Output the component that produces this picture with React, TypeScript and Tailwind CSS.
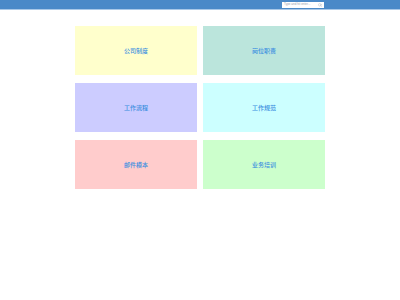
import { Search } from "lucide-react";

const cards = [
  { label: "公司制度", bg: "bg-[#ffffcc]" },
  { label: "岗位职责", bg: "bg-[#bbe5dc]" },
  { label: "工作流程", bg: "bg-[#ccccff]" },
  { label: "工作规范", bg: "bg-[#ccffff]" },
  { label: "邮件模本", bg: "bg-[#ffcccc]" },
  { label: "业务培训", bg: "bg-[#ccffcc]" },
];

export default function App() {
  return (
    <div className="min-h-[300px] w-[400px] bg-white font-['Liberation_Sans','Noto_Sans_CJK_SC',sans-serif]">
      <div className="flex h-[10px] items-center justify-end border-b border-[#a9c8e8] bg-[#4a89c8] pr-[76px]">
        <div className="flex h-[6px] w-[42px] items-center justify-between bg-white px-[2px]">
          <span className="text-[3px] leading-none text-gray-400">Type and hit enter...</span>
          <Search className="h-[4px] w-[4px] text-gray-400" strokeWidth={2} />
        </div>
      </div>
      <div className="mx-auto mt-[16px] grid w-[250px] grid-cols-2 gap-x-[6px] gap-y-[8px]">
        {cards.map((c) => (
          <div
            key={c.label}
            className={`flex h-[49px] items-center justify-center ${c.bg}`}
          >
            <span className="text-[6px] font-medium leading-none text-[#3b8ee0]">{c.label}</span>
          </div>
        ))}
      </div>
    </div>
  );
}
